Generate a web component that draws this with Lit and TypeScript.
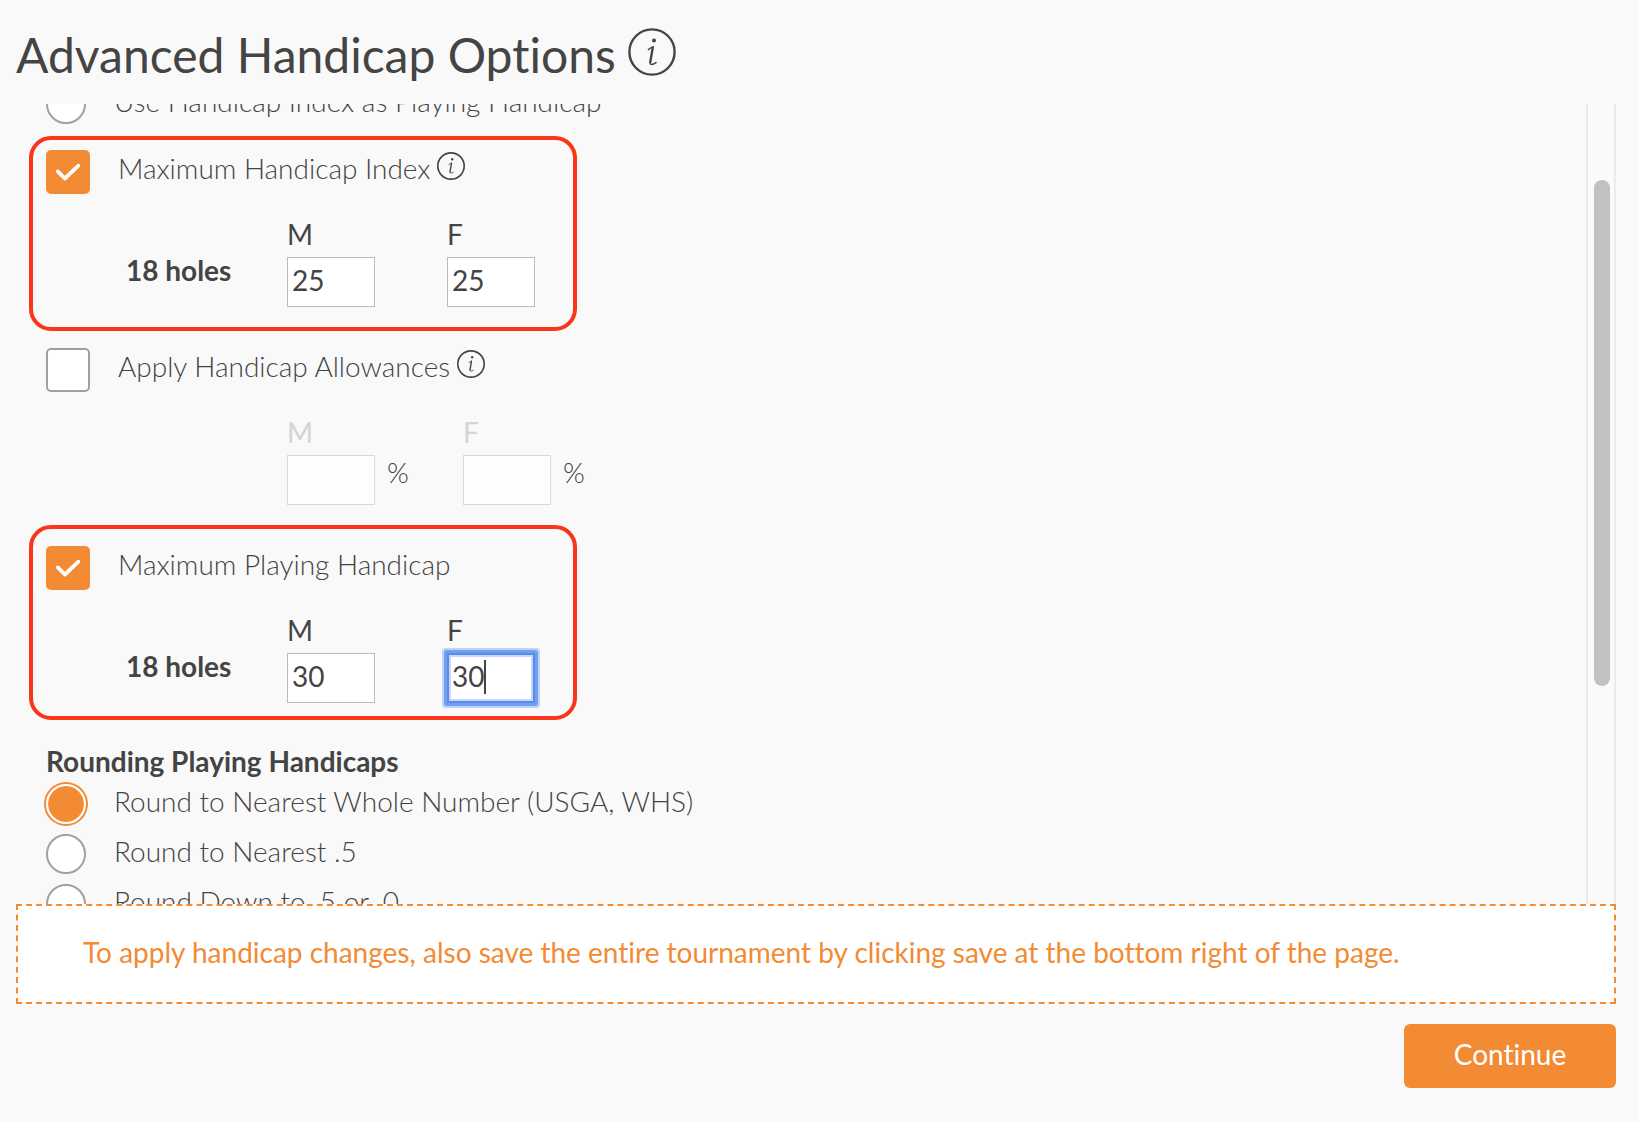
import { LitElement, html, css, nothing } from "lit";
import { customElement, property } from "lit/decorators.js";
import { classMap } from "lit/directives/class-map.js";

@customElement("info-icon")
class InfoIcon extends LitElement {
  @property() label = "More information";
  @property({ type: Number }) stroke = 2.4;

  static styles = css`
    :host {
      display: block;
      flex: none;
    }
    .button {
      display: block;
      width: 100%;
      height: 100%;
      padding: 0;
      border: 0;
      background: none;
      color: inherit;
      cursor: pointer;
    }
    .icon {
      display: block;
      width: 100%;
      height: 100%;
    }
  `;

  render() {
    return html`
      <button class="button" type="button" aria-label=${this.label}>
        <svg class="icon" viewBox="0 0 48 48" fill="none" stroke="currentColor" stroke-linecap="round">
          <circle cx="24" cy="24" r="22.6" stroke-width=${this.stroke} />
          <circle cx="26" cy="12.4" r="2" fill="currentColor" stroke="none" />
          <path d="M20.4 21.6C22 20.2 23.6 19.2 25 18.8" stroke-width="1.4" />
          <path d="M24.8 19.4L22.3 34" stroke-width="2.4" />
          <path d="M22.2 34.2C21.9 37.2 24.4 37 28 34.6" stroke-width="1.6" />
        </svg>
      </button>
    `;
  }
}

interface Field {
  label: string;
  value: string;
  active?: boolean;
}

interface Option {
  id: string;
  title: string;
  checked: boolean;
  info?: boolean;
  rowLabel?: string;
  unit?: string;
  frame?: "snug" | "roomy";
  fields: Field[];
}

const OPTIONS: Option[] = [
  {
    id: "max-index",
    title: "Maximum Handicap Index",
    checked: true,
    info: true,
    rowLabel: "18 holes",
    frame: "snug",
    fields: [
      { label: "M", value: "25" },
      { label: "F", value: "25" },
    ],
  },
  {
    id: "allowances",
    title: "Apply Handicap Allowances",
    checked: false,
    info: true,
    unit: "%",
    fields: [
      { label: "M", value: "" },
      { label: "F", value: "" },
    ],
  },
  {
    id: "max-playing",
    title: "Maximum Playing Handicap",
    checked: true,
    rowLabel: "18 holes",
    frame: "roomy",
    fields: [
      { label: "M", value: "30" },
      { label: "F", value: "30", active: true },
    ],
  },
];

const ROUNDING = [
  "Round to Nearest Whole Number (USGA, WHS)",
  "Round to Nearest .5",
  "Round Down to .5 or .0",
];

@customElement("app-root")
class AppRoot extends LitElement {
  static styles = css`
    :host {
      --accent: #f28b34;
      --ink: #444;
      display: flex;
      flex-direction: column;
      box-sizing: border-box;
      height: 100vh;
      padding: 26px 22px 34px 16px;
      background: #f9f9f9;
      color: var(--ink);
      font-family: Lato, "Open Sans", sans-serif;
      font-size: 28px;
      font-weight: 300;
      font-variant-ligatures: none;
      line-height: 36px;
    }
    * {
      box-sizing: border-box;
    }
    .header {
      display: flex;
      gap: 12px;
      padding-bottom: 20px;
    }
    .title {
      margin: 0;
      font-size: 48px;
      font-weight: 400;
      line-height: 58px;
    }
    .title-info {
      width: 48px;
      height: 48px;
      margin-top: 2px;
    }
    .viewport {
      display: flex;
      flex: 1;
      min-height: 0;
      overflow: hidden;
    }
    /* The list is scrolled half a row past its first choice. */
    .content {
      flex: 1;
      min-width: 0;
      margin-top: -25px;
      padding-left: 13px;
    }
    .track {
      display: flex;
      flex-direction: column;
      flex: none;
      width: 30px;
      padding-left: 6px;
      border: solid #ebebeb;
      border-width: 0 2px;
      background: #fafafa;
    }
    .before {
      flex: 76;
    }
    .thumb {
      flex: 506;
      width: 16px;
      border-radius: 8px;
      background: #c1c1c1;
    }
    .after {
      flex: 218;
    }

    .radio-row {
      display: flex;
      gap: 28px;
      height: 50px;
      padding-left: 17px;
    }
    .radio {
      appearance: none;
      flex: none;
      width: 40px;
      height: 40px;
      margin: 5px 0;
      border: 2px solid #a0a0a0;
      border-radius: 50%;
      background: #fff;
    }
    .radio:checked {
      border-color: #fff;
      background: var(--accent);
      background-clip: padding-box;
      box-shadow: 0 0 0 2px var(--accent);
    }
    .radio-label {
      line-height: 44px;
    }

    .option {
      width: fit-content;
      padding: 17px 38px 20px 17px;
    }
    .framed {
      border: 4px solid #f8361a;
      border-radius: 22px;
      padding-left: 13px;
    }
    .snug {
      margin-top: 7px;
      padding-top: 10px;
    }
    .roomy {
      padding-bottom: 13px;
    }
    .option-head {
      display: flex;
      height: 44px;
    }
    .check-wrap {
      display: grid;
      flex: none;
      width: 44px;
      height: 44px;
      margin-right: 28px;
    }
    .check,
    .tick {
      grid-area: 1 / 1;
      width: 44px;
      height: 44px;
      margin: 0;
    }
    .check {
      appearance: none;
      border: 2px solid #a0a0a0;
      border-radius: 5px;
      background: #fff;
    }
    .check:checked {
      border-color: var(--accent);
      background: var(--accent);
    }
    .tick {
      pointer-events: none;
    }
    .option-info {
      width: 28px;
      height: 28px;
      margin: 2px 0 0 7px;
    }
    .fields {
      display: flex;
      gap: 72px;
      margin-top: 22px;
    }
    .row-label {
      width: 169px;
      padding: 36px 0 0 80px;
      font-weight: 700;
      white-space: nowrap;
    }
    .units {
      gap: 52px;
    }
    .units .row-label {
      width: 189px;
    }
    .field {
      font-weight: 400;
    }
    .field-label {
      display: block;
      margin-bottom: 5px;
    }
    .entry {
      display: flex;
      position: relative;
    }
    .input {
      width: 88px;
      height: 50px;
      padding: 0 4px 4px;
      border: 1px solid #bbb;
      border-radius: 0;
      outline: none;
      background: #fff;
      color: inherit;
      font: inherit;
    }
    .input.active {
      padding: 0 3px 4px;
      border: 2px solid #5b8be6;
      border-radius: 1px;
      box-shadow:
        inset 0 0 0 2px #c6d7fa,
        0 0 0 3px #709ff2,
        0 0 0 5px #c0d3f7;
    }
    .caret {
      position: absolute;
      top: 7px;
      left: 37px;
      width: 2px;
      height: 34px;
      background: var(--ink);
    }
    .unit {
      width: 36px;
      padding-left: 12px;
      font-weight: 300;
      line-height: 34px;
    }
    .disabled .field-label {
      color: #d4d4d4;
    }
    .disabled .input {
      border-color: #d8d8d8;
      background: #fdfdfd;
    }

    .group-title {
      margin: 0;
      padding: 24px 0 0 17px;
      font-size: 28px;
      font-weight: 700;
      line-height: 35px;
    }

    .notice {
      margin: 0 0 20px;
      padding: 28px 65px 32px;
      border: 2px dashed var(--accent);
      background: #fff;
      color: var(--accent);
      font-weight: 400;
    }
    .continue {
      align-self: flex-end;
      flex: none;
      width: 212px;
      height: 64px;
      padding: 0 0 4px;
      border: 0;
      border-radius: 6px;
      background: var(--accent);
      color: #fff;
      font: inherit;
      font-variant-ligatures: none;
      font-weight: 400;
      cursor: pointer;
    }
  `;

  private renderRadio(name: string, id: string, text: string, checked: boolean) {
    return html`
      <div class="radio-row">
        <input class="radio" type="radio" name=${name} id=${id} ?checked=${checked} />
        <label class="radio-label" for=${id}>${text}</label>
      </div>
    `;
  }

  private renderField(option: Option, field: Field) {
    const id = `${option.id}-${field.label.toLowerCase()}`;
    return html`
      <div class="field">
        <label class="field-label" for=${id}>${field.label}</label>
        <div class="entry">
          <input
            class=${classMap({ input: true, active: !!field.active })}
            id=${id}
            type="text"
            inputmode="numeric"
            .value=${field.value}
            ?disabled=${!option.checked}
          />
          ${field.active ? html`<span class="caret"></span>` : nothing}
          ${option.unit ? html`<span class="unit">${option.unit}</span>` : nothing}
        </div>
      </div>
    `;
  }

  private renderOption(option: Option) {
    const classes = {
      option: true,
      framed: !!option.frame,
      snug: option.frame === "snug",
      roomy: option.frame === "roomy",
      disabled: !option.checked,
    };
    return html`
      <section class=${classMap(classes)}>
        <div class="option-head">
          <span class="check-wrap">
            <input class="check" type="checkbox" id=${option.id} ?checked=${option.checked} />
            ${option.checked
              ? html`<svg class="tick" viewBox="0 0 44 44" fill="none" stroke="#fff" stroke-width="3.8" stroke-linecap="round" stroke-linejoin="round">
                  <path d="M11.8 21.4L18.9 28.5L32.4 15.7" />
                </svg>`
              : nothing}
          </span>
          <label for=${option.id}>${option.title}</label>
          ${option.info
            ? html`<info-icon class="option-info" .stroke=${2.8} label="About ${option.title}"></info-icon>`
            : nothing}
        </div>
        <div class=${classMap({ fields: true, units: !!option.unit })}>
          <span class="row-label">${option.rowLabel ?? nothing}</span>
          ${option.fields.map((field) => this.renderField(option, field))}
        </div>
      </section>
    `;
  }

  render() {
    return html`
      <header class="header">
        <h1 class="title">Advanced Handicap Options</h1>
        <info-icon class="title-info" label="About advanced handicap options"></info-icon>
      </header>
      <div class="viewport">
        <div class="content">
          ${this.renderRadio("playing", "use-index", "Use Handicap Index as Playing Handicap", false)}
          ${OPTIONS.map((option) => this.renderOption(option))}
          <h2 class="group-title" id="rounding-title">Rounding Playing Handicaps</h2>
          <div role="radiogroup" aria-labelledby="rounding-title">
            ${ROUNDING.map((text, i) => this.renderRadio("rounding", `rounding-${i}`, text, i === 0))}
          </div>
        </div>
        <div class="track" aria-hidden="true">
          <div class="before"></div>
          <div class="thumb"></div>
          <div class="after"></div>
        </div>
      </div>
      <p class="notice">
        To apply handicap changes, also save the entire tournament by clicking save at the bottom right of the page.
      </p>
      <button class="continue" type="button">Continue</button>
    `;
  }
}
